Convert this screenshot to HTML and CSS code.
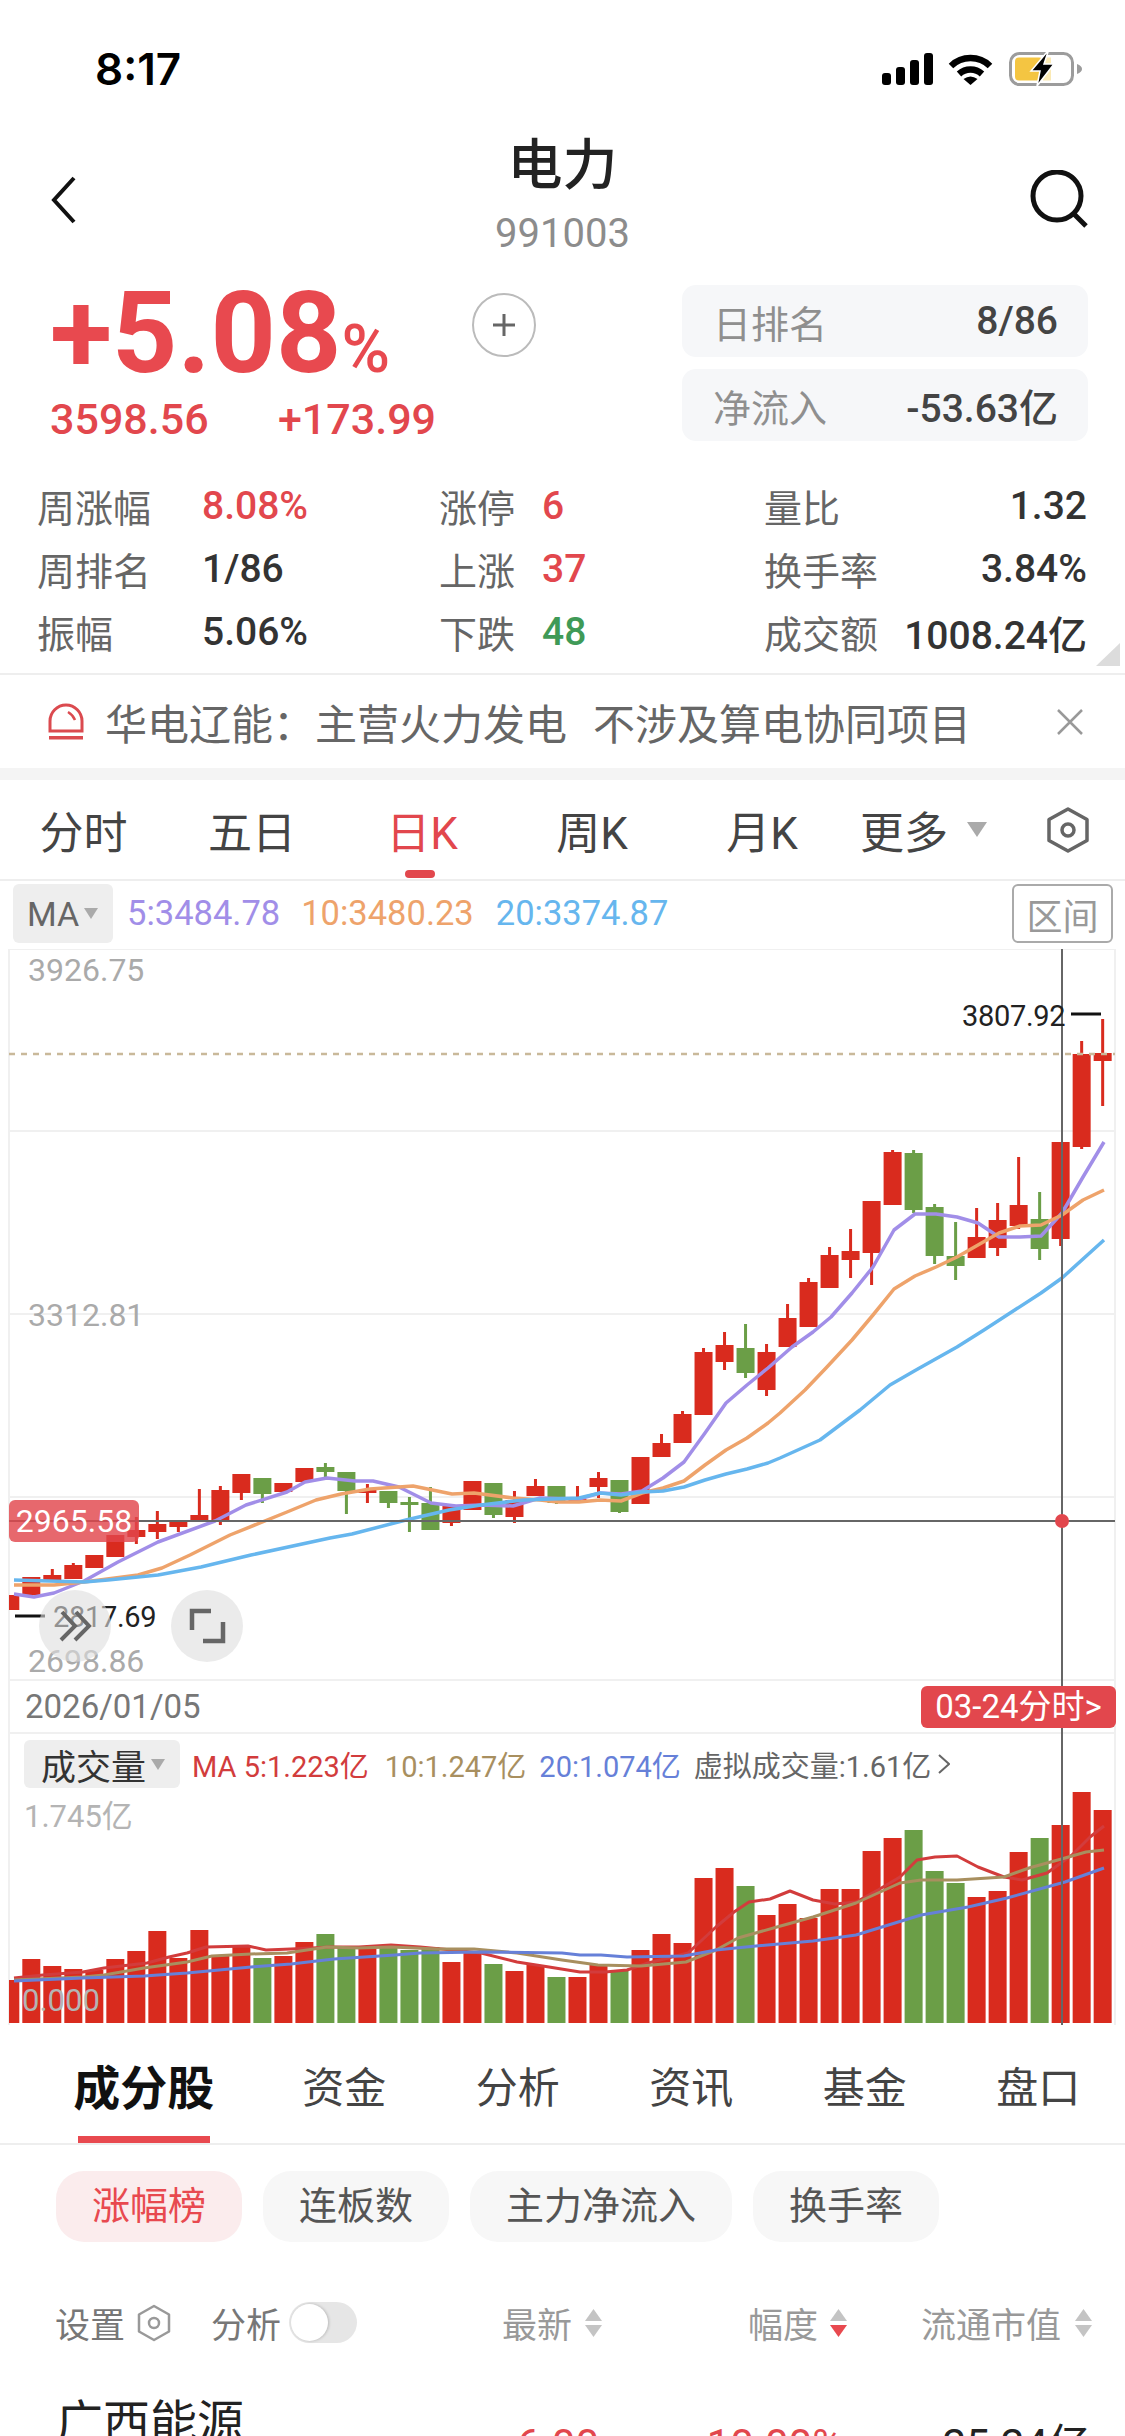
FILE: index.html
```html
<!DOCTYPE html>
<html lang="zh-CN">
<head>
    <meta charset="UTF-8">
    <meta name="viewport" content="width=device-width, initial-scale=1.0">
    <title>电力 991003</title>
    <link rel="stylesheet" href="styles.css">
</head>
<body>
    <div class="page">
        <div class="status-bar">
            <span class="time">8:17</span>
            <div class="status-icons">
                <svg class="icon-signal" viewBox="0 0 51 32">
                    <rect x="0" y="20" width="9" height="12" rx="3"/>
                    <rect x="14" y="14" width="9" height="18" rx="3"/>
                    <rect x="28" y="7" width="9" height="25" rx="3"/>
                    <rect x="42" y="0" width="9" height="32" rx="3"/>
                </svg>
                <svg class="icon-wifi" viewBox="0 0 45 32">
                    <path d="M3 13 A28 28 0 0 1 42 13" fill="none" stroke="#000" stroke-width="6.5"/>
                    <path d="M11 21 A17 17 0 0 1 34 21" fill="none" stroke="#000" stroke-width="6.5"/>
                    <path d="M15.5 26 L22.5 32 L29.5 26 Q22.5 21 15.5 26 Z"/>
                </svg>
                <svg class="icon-battery" viewBox="0 0 74 36">
                    <rect x="1.5" y="2.5" width="62" height="31" rx="9" fill="#fff" stroke="#9c9c9c" stroke-width="3"/>
                    <rect x="6" y="6.5" width="28" height="23" rx="4" fill="#f4c542"/>
                    <rect x="34" y="6.5" width="8" height="23" fill="#fbeab5"/>
                    <path d="M68 13 Q73 15 73 18 Q73 21 68 23 Z" fill="#9c9c9c"/>
                    <path d="M38 1 L22 20 L31 20 L28 35 L45 13 L35 13 L39 1 Z" stroke="#fff" stroke-width="1.5"/>
                </svg>
            </div>
        </div>

        <div class="header">
            <svg class="icon-back" viewBox="0 0 26 48">
                <path d="M23 2 L3 24 L23 46" fill="none" stroke="#111" stroke-width="4"/>
            </svg>
            <div class="title-col">
                <div class="title">电力</div>
                <div class="code">991003</div>
            </div>
            <svg class="icon-search" viewBox="0 0 60 60">
                <circle cx="27" cy="26" r="24" fill="none" stroke="#111" stroke-width="5"/>
                <path d="M44 44 L56 56" fill="none" stroke="#111" stroke-width="5"/>
            </svg>
        </div>

        <div class="quote">
            <div class="quote-left">
                <div class="pct">+5.08<span class="pct-sign">%</span></div>
                <div class="quote-sub">
                    <span class="quote-price">3598.56</span>
                    <span>+173.99</span>
                </div>
            </div>
            <div class="add-btn">
                <svg viewBox="0 0 26 26" width="26" height="26">
                    <path d="M13 2 V24 M2 13 H24" stroke="#666" stroke-width="3"/>
                </svg>
            </div>
            <div class="rank-cards">
                <div class="rank-card"><span class="rank-label">日排名</span><span class="rank-value">8/86</span></div>
                <div class="rank-card"><span class="rank-label">净流入</span><span class="rank-value">-53.63亿</span></div>
            </div>
        </div>

        <div class="stats">
            <div class="stat"><span class="stat-label label-wide">周涨幅</span><span class="red">8.08%</span></div>
            <div class="stat"><span class="stat-label label-short">涨停</span><span class="red">6</span></div>
            <div class="stat stat-end"><span class="stat-label">量比</span><span>1.32</span></div>
            <div class="stat"><span class="stat-label label-wide">周排名</span><span>1/86</span></div>
            <div class="stat"><span class="stat-label label-short">上涨</span><span class="red">37</span></div>
            <div class="stat stat-end"><span class="stat-label">换手率</span><span>3.84%</span></div>
            <div class="stat"><span class="stat-label label-wide">振幅</span><span>5.06%</span></div>
            <div class="stat"><span class="stat-label label-short">下跌</span><span class="green">48</span></div>
            <div class="stat stat-end"><span class="stat-label">成交额</span><span>1008.24亿</span></div>
            <div class="corner-mark"></div>
        </div>

        <div class="news">
            <svg class="icon-alarm" viewBox="0 0 36 38">
                <path d="M2 28 V18 A16 16 0 0 1 34 18 V28 Z" fill="none" stroke="#db4a4f" stroke-width="3"/>
                <path d="M20 9 Q25 12 27 17" fill="none" stroke="#db4a4f" stroke-width="2.5"/>
                <rect x="1" y="33" width="34" height="3.5" fill="#db4a4f"/>
            </svg>
            <span class="news-text">华电辽能：主营火力发电<span class="news-gap">不涉及算电协同项目</span></span>
            <svg class="icon-close" viewBox="0 0 26 26">
                <path d="M1 1 L25 25 M25 1 L1 25" stroke="#999" stroke-width="2.5"/>
            </svg>
        </div>
        <div class="band"></div>

        <div class="period-tabs">
            <div class="period-tab tab-first">分时</div>
            <div class="period-tab">五日</div>
            <div class="period-tab active">日K</div>
            <div class="period-tab">周K</div>
            <div class="period-tab">月K</div>
            <div class="period-more">更多<span class="arrow-down arrow-big"></span></div>
            <svg class="icon-hex" viewBox="0 0 42 46">
                <path d="M21 2 L40 12.5 V33.5 L21 44 L2 33.5 V12.5 Z" fill="none" stroke="#666" stroke-width="3.5" stroke-linejoin="round"/>
                <circle cx="21" cy="23" r="6" fill="none" stroke="#666" stroke-width="3.5"/>
            </svg>
        </div>

        <div class="ma-row">
            <div class="ma-btn">MA<span class="arrow-down"></span></div>
            <span class="ma-val ma5">5:3484.78</span>
            <span class="ma-val ma10">10:3480.23</span>
            <span class="ma-val ma20">20:3374.87</span>
            <div class="range-btn">区间</div>
        </div>

        <div class="chart">
            <svg id="kline" class="kline" viewBox="0 949 1125 1076"></svg>

            <div class="price-pane">
                <span class="axis-label axis-top">3926.75</span>
                <span class="axis-label axis-mid">3312.81</span>
                <span class="axis-label axis-low">2698.86</span>
                <span class="price-mark high-mark">3807.92</span>
                <span class="price-mark low-mark">2817.69</span>
                <span class="cross-tag">2965.58</span>
                <div class="float-btn btn-expand">
                    <svg viewBox="0 0 72 72" width="72" height="72">
                        <path d="M23 22 L36 36 L22 50 M37 22 L50 36 L36 50" fill="none" stroke="#666" stroke-width="4"/>
                    </svg>
                </div>
                <div class="float-btn btn-full">
                    <svg viewBox="0 0 72 72" width="72" height="72">
                        <path d="M21 40 V21 H40 M52 32 V51 H32" fill="none" stroke="#666" stroke-width="4.5"/>
                    </svg>
                </div>
            </div>

            <div class="date-row">
                <span>2026/01/05</span>
                <span class="date-tag">03-24分时&gt;</span>
            </div>

            <div class="vol-pane">
                <div class="vol-legend">
                    <div class="vol-btn">成交量<span class="arrow-down"></span></div>
                    <span class="vol-ma5">MA 5:1.223亿</span>
                    <span class="vol-ma10">10:1.247亿</span>
                    <span class="vol-ma20">20:1.074亿</span>
                    <span class="vol-virtual">虚拟成交量:1.61亿</span>
                    <svg class="icon-more" viewBox="0 0 12 20">
                        <path d="M1 1 L11 10 L1 19" fill="none" stroke="#666" stroke-width="2"/>
                    </svg>
                </div>
                <span class="vol-axis vol-max">1.745亿</span>
                <span class="vol-axis vol-min">0.000</span>
            </div>
        </div>

        <div class="sub-tabs">
            <div class="sub-tab active">成分股</div>
            <div class="sub-tab">资金</div>
            <div class="sub-tab">分析</div>
            <div class="sub-tab">资讯</div>
            <div class="sub-tab">基金</div>
            <div class="sub-tab">盘口</div>
        </div>

        <div class="pills">
            <div class="pill active">涨幅榜</div>
            <div class="pill">连板数</div>
            <div class="pill">主力净流入</div>
            <div class="pill">换手率</div>
        </div>

        <div class="list-head">
            <span>设置</span>
            <svg class="icon-hex-small" viewBox="0 0 34 38">
                <path d="M17 2 L32 10.5 V27.5 L17 36 L2 27.5 V10.5 Z" fill="none" stroke="#999" stroke-width="2.5" stroke-linejoin="round"/>
                <circle cx="17" cy="19" r="5" fill="none" stroke="#999" stroke-width="2.5"/>
            </svg>
            <span class="head-analyse">分析</span>
            <div class="toggle"><div class="toggle-knob"></div></div>
            <span class="head-latest">最新</span>
            <svg class="icon-sort sort-latest" viewBox="0 0 17 28">
                <path d="M8.5 0 L17 12 H0 Z" fill="#c4c4c4"/>
                <path d="M8.5 28 L17 16 H0 Z" fill="#c4c4c4"/>
            </svg>
            <span class="head-change">幅度</span>
            <svg class="icon-sort sort-change" viewBox="0 0 17 28">
                <path d="M8.5 0 L17 12 H0 Z" fill="#c4c4c4"/>
                <path d="M8.5 28 L17 16 H0 Z" fill="#e8494f"/>
            </svg>
            <span class="head-cap">流通市值</span>
            <svg class="icon-sort sort-cap" viewBox="0 0 17 28">
                <path d="M8.5 0 L17 12 H0 Z" fill="#c4c4c4"/>
                <path d="M8.5 28 L17 16 H0 Z" fill="#c4c4c4"/>
            </svg>
        </div>

        <div class="list-row">
            <span class="row-name">广西能源</span>
            <span class="row-val val-price red">6.00</span>
            <span class="row-val val-change red">10.00%</span>
            <span class="row-val val-cap">25.24亿</span>
        </div>
    </div>

    <script src="chart.js"></script>
</body>
</html>
```

FILE: styles.css
```css
* {
    box-sizing: border-box;
}
body {
    margin: 0;
    background: #fff;
    color: #333;
    font-family: Roboto, "Noto Sans CJK SC", sans-serif;
}
.page {
    width: 1125px;
    height: 2436px;
    overflow: hidden;
}
.red {
    color: #e2474d;
}
.green {
    color: #3f9a57;
}

/* status bar */
.status-bar {
    height: 120px;
    padding: 18px 42px 0 95px;
    display: flex;
    align-items: center;
    justify-content: space-between;
}
.time {
    font-family: Inter, sans-serif;
    font-size: 44px;
    font-weight: 600;
    color: #000;
}
.status-icons {
    display: flex;
    align-items: center;
}
.icon-signal {
    width: 51px;
    height: 32px;
}
.icon-wifi {
    width: 45px;
    height: 32px;
    margin-left: 15px;
}
.icon-battery {
    width: 74px;
    height: 36px;
    margin-left: 16px;
}

/* header */
.header {
    height: 160px;
    padding: 0 35px;
    display: grid;
    grid-template-columns: 1fr auto 1fr;
    align-items: center;
}
.icon-back {
    width: 26px;
    height: 48px;
    margin-left: 16px;
}
.icon-search {
    width: 60px;
    height: 60px;
    justify-self: end;
}
.title-col {
    height: 160px;
    padding-top: 10px;
    text-align: center;
}
.title {
    font-size: 55px;
    font-weight: 500;
    line-height: 70px;
    color: #222;
}
.code {
    margin-top: 9px;
    font-size: 40px;
    line-height: 50px;
    color: #8c8c8c;
}

/* quote block */
.quote {
    height: 194px;
    padding: 5px 37px 0 50px;
    display: flex;
    align-items: flex-start;
}
.quote-left {
    width: 422px;
}
.pct {
    height: 90px;
    padding-top: 3px;
    font-size: 114px;
    font-weight: 700;
    line-height: 90px;
    color: #e8494f;
    white-space: nowrap;
}
.pct-sign {
    font-size: 66px;
    font-weight: 500;
    line-height: 1;
}
.quote-sub {
    margin-top: 22px;
    display: flex;
    font-size: 43px;
    font-weight: 500;
    line-height: 44px;
    color: #e2474d;
}
.quote-price {
    width: 228px;
}
.add-btn {
    width: 64px;
    height: 64px;
    margin-top: 8px;
    border: 2px solid #bbb;
    border-radius: 50%;
    display: flex;
    align-items: center;
    justify-content: center;
}
.rank-cards {
    width: 406px;
    margin-left: auto;
    display: flex;
    flex-direction: column;
    gap: 12px;
}
.rank-card {
    height: 72px;
    padding: 0 30px 0 31px;
    background: #f6f7f9;
    border-radius: 14px;
    display: flex;
    align-items: center;
    justify-content: space-between;
}
.rank-label {
    font-size: 38px;
    color: #8f8f8f;
}
.rank-value {
    font-size: 39px;
    font-weight: 500;
    color: #444;
}

/* stats grid */
.stats {
    position: relative;
    height: 201px;
    padding: 0 38px 0 37px;
    display: grid;
    grid-template-columns: 402px 325px 323px;
    grid-auto-rows: 63px;
    border-bottom: 2px solid #eee;
    font-size: 39px;
    font-weight: 500;
    color: #333;
}
.stat {
    display: flex;
    align-items: center;
}
.stat-end {
    justify-content: space-between;
}
.stat-label {
    font-size: 38px;
    font-weight: 400;
    color: #666;
}
.label-wide {
    width: 165px;
}
.label-short {
    width: 103px;
}
.corner-mark {
    position: absolute;
    right: 5px;
    bottom: 7px;
    width: 24px;
    height: 23px;
    background: #dcdcdc;
    clip-path: polygon(100% 0, 100% 100%, 0 100%);
}

/* news strip */
.news {
    height: 93px;
    padding: 0 42px 0 48px;
    display: flex;
    align-items: center;
}
.icon-alarm {
    width: 36px;
    height: 38px;
}
.news-text {
    margin-left: 21px;
    font-size: 42px;
    color: #666;
    white-space: nowrap;
}
.news-gap {
    margin-left: 26px;
}
.icon-close {
    width: 26px;
    height: 26px;
    margin-left: auto;
}
.band {
    height: 12px;
    background: #f4f4f4;
}

/* period tabs */
.period-tabs {
    height: 101px;
    display: flex;
    align-items: center;
    border-bottom: 2px solid #eee;
    font-size: 44px;
    color: #444;
}
.period-tab {
    position: relative;
    width: 170px;
    height: 99px;
    display: flex;
    align-items: center;
    justify-content: center;
}
.period-tab.tab-first {
    width: 167px;
}
.period-tab.active {
    color: #e2474d;
}
.period-tab.active::after {
    content: "";
    position: absolute;
    left: 68px;
    bottom: 1px;
    width: 30px;
    height: 8px;
    border-radius: 4px;
    background: #e2474d;
}
.period-more {
    margin-left: 13px;
    display: flex;
    align-items: center;
}
.arrow-down {
    width: 0;
    height: 0;
    margin-left: 5px;
    border-left: 7px solid transparent;
    border-right: 7px solid transparent;
    border-top: 11px solid #aaa;
}
.arrow-big {
    margin-left: 19px;
    border-left-width: 10px;
    border-right-width: 10px;
    border-top-width: 15px;
}
.icon-hex {
    width: 42px;
    height: 46px;
    margin-left: 60px;
}

/* MA legend */
.ma-row {
    height: 68px;
    padding: 3px 12px 0 13px;
    display: flex;
    align-items: flex-start;
}
.ma-btn {
    width: 100px;
    height: 59px;
    padding-left: 14px;
    border-radius: 6px;
    background: #eee;
    display: flex;
    align-items: center;
    font-size: 34px;
    color: #666;
}
.ma-val {
    margin-left: 22px;
    font-size: 34.5px;
    line-height: 59px;
}
.ma-val.ma5 {
    margin-left: 14px;
    color: #a18ee8;
}
.ma-val.ma10 {
    margin-left: 21px;
    color: #eea36b;
}
.ma-val.ma20 {
    color: #66b6ee;
}
.range-btn {
    width: 101px;
    height: 59px;
    margin-left: auto;
    border: 2px solid #aaa;
    border-radius: 6px;
    display: flex;
    align-items: center;
    justify-content: center;
    font-size: 36px;
    color: #999;
}

/* chart */
.chart {
    position: relative;
    height: 1076px;
}
.kline {
    position: absolute;
    left: 0;
    top: 0;
    width: 1125px;
    height: 1076px;
}
.price-pane {
    position: relative;
    height: 731px;
}
.axis-label {
    position: absolute;
    left: 28px;
    font-size: 32px;
    line-height: 36px;
    color: #aaa;
}
.axis-top {
    top: 3px;
}
.axis-mid {
    top: 348px;
}
.axis-low {
    top: 694px;
}
.price-mark {
    position: absolute;
    font-size: 29px;
    line-height: 36px;
    letter-spacing: -0.3px;
    color: #222;
}
.high-mark {
    left: 962px;
    top: 49px;
}
.low-mark {
    left: 53px;
    top: 650px;
}
.cross-tag {
    position: absolute;
    left: 9px;
    top: 551px;
    width: 130px;
    height: 42px;
    border-radius: 6px;
    background: rgba(226, 71, 77, 0.82);
    font-size: 32px;
    line-height: 42px;
    text-align: center;
    color: #fff;
}
.float-btn {
    position: absolute;
    top: 641px;
    width: 72px;
    height: 72px;
    border-radius: 50%;
    background: rgba(222, 222, 222, 0.6);
}
.btn-expand {
    left: 39px;
}
.btn-full {
    left: 171px;
}
.date-row {
    position: relative;
    height: 53px;
    padding-left: 25px;
    display: flex;
    align-items: center;
    font-size: 33px;
    color: #777;
}
.date-tag {
    position: absolute;
    left: 921px;
    top: 6px;
    width: 195px;
    height: 42px;
    border-radius: 6px;
    background: #e2474d;
    font-size: 33px;
    line-height: 42px;
    text-align: center;
    color: #fff;
}
.vol-pane {
    position: relative;
    height: 292px;
}
.vol-legend {
    padding: 7px 0 0 24px;
    display: flex;
    align-items: center;
    font-size: 29px;
    white-space: nowrap;
}
.vol-btn {
    width: 156px;
    height: 48px;
    padding-left: 17px;
    border-radius: 6px;
    background: #eee;
    display: flex;
    align-items: center;
    font-size: 35px;
    color: #333;
}
.vol-ma5 {
    margin-left: 12px;
    color: #d23c3c;
}
.vol-ma10 {
    margin-left: 16px;
    color: #a88f5f;
}
.vol-ma20 {
    margin-left: 13px;
    color: #6680d8;
}
.vol-virtual {
    margin-left: 13px;
    color: #666;
}
.icon-more {
    width: 12px;
    height: 20px;
    margin-left: 7px;
}
.vol-axis {
    position: absolute;
    left: 24px;
    font-size: 31px;
    line-height: 36px;
    color: #b4b4b4;
}
.vol-max {
    top: 66px;
}
.vol-min {
    left: 22px;
    top: 250px;
}

/* lower tabs */
.sub-tabs {
    height: 120px;
    padding-left: 57px;
    display: flex;
    align-items: center;
    border-bottom: 2px solid #eee;
    font-size: 42px;
    color: #444;
}
.sub-tab {
    position: relative;
    width: 174px;
    height: 118px;
    display: flex;
    align-items: center;
    justify-content: center;
}
.sub-tab.active {
    margin-right: 27px;
    font-size: 47px;
    font-weight: 700;
    color: #111;
}
.sub-tab.active::after {
    content: "";
    position: absolute;
    left: 21px;
    bottom: 0;
    width: 132px;
    height: 7px;
    background: #e8494f;
}

/* filter pills */
.pills {
    padding: 26px 0 0 56px;
    display: flex;
    gap: 21px;
}
.pill {
    height: 71px;
    padding: 0 36px;
    border-radius: 28px;
    background: #f7f7f7;
    font-size: 38px;
    line-height: 71px;
    color: #555;
}
.pill.active {
    background: #fbeced;
    color: #e8494f;
}

/* list */
.list-head {
    height: 41px;
    margin-top: 60px;
    padding-left: 55px;
    display: flex;
    align-items: center;
    font-size: 35px;
    color: #999;
    white-space: nowrap;
}
.list-head > span:first-child {
    color: #777;
}
.icon-hex-small {
    width: 34px;
    height: 38px;
    margin-left: 12px;
}
.head-analyse {
    margin-left: 40px;
    color: #777;
}
.toggle {
    width: 68px;
    height: 41px;
    margin-left: 8px;
    padding: 2px;
    border-radius: 21px;
    background: #e6e6e6;
}
.toggle-knob {
    width: 37px;
    height: 37px;
    border-radius: 50%;
    background: #fff;
    box-shadow: 1px 0 3px rgba(0, 0, 0, 0.2);
}
.head-latest {
    margin-left: 145px;
}
.icon-sort {
    width: 17px;
    height: 28px;
}
.sort-latest {
    margin-left: 13px;
}
.sort-change {
    margin-left: 12px;
}
.sort-cap {
    margin-left: 14px;
}
.head-change {
    margin-left: 146px;
}
.head-cap {
    margin-left: 74px;
}
.list-row {
    margin-top: 50px;
    padding-left: 56px;
    display: flex;
    align-items: flex-start;
}
.row-name {
    width: 191px;
    font-size: 47px;
    line-height: 60px;
    color: #222;
    white-space: nowrap;
}
.row-val {
    padding-top: 27px;
    font-size: 42px;
    line-height: 50px;
    text-align: right;
}
.val-price {
    width: 352px;
}
.val-change {
    width: 244px;
}
.val-cap {
    width: 247px;
    color: #222;
}
```

FILE: chart.js
```js
// all coordinates are page pixels, the svg viewBox starts at y=949
const RED = '#d92b1e';
const GREEN = '#6b9e47';
const STEP = 21.007;
const FIRST_X = 10.3;
const BAR_W = 18;
const LEFT = 9;
const RIGHT = 1115;
const VOL_BASE = 2023;

// [bodyTop, bodyBottom, wickTop, wickBottom, green?]
const candles = [
    [1595, 1610, 1595, 1610], [1577, 1595, 1577, 1595], [1575, 1580, 1569, 1580], [1565, 1579, 1563, 1579],
    [1555, 1568, 1555, 1568], [1535, 1557, 1535, 1557], [1530, 1537, 1517, 1544], [1524, 1532, 1511, 1539],
    [1521, 1527, 1521, 1532], [1515, 1520, 1489, 1520], [1490, 1521, 1486, 1525], [1474, 1493, 1474, 1500],
    [1478, 1494, 1478, 1503, 1], [1483, 1492, 1483, 1492], [1468, 1482, 1468, 1482], [1467, 1472, 1463, 1477, 1],
    [1472, 1491, 1472, 1514, 1], [1490, 1493, 1484, 1503], [1491, 1503, 1491, 1508, 1], [1502, 1505, 1497, 1532, 1],
    [1503, 1530, 1487, 1530, 1], [1506, 1523, 1505, 1526], [1481, 1510, 1481, 1510], [1483, 1515, 1483, 1518, 1],
    [1500, 1517, 1491, 1523], [1486, 1496, 1479, 1496], [1486, 1503, 1486, 1504, 1], [1499, 1501, 1486, 1502],
    [1478, 1487, 1472, 1498], [1480, 1512, 1480, 1513, 1], [1457, 1504, 1457, 1504], [1443, 1457, 1434, 1457],
    [1414, 1443, 1411, 1443], [1352, 1415, 1348, 1415], [1345, 1362, 1332, 1370], [1348, 1373, 1324, 1378, 1],
    [1352, 1390, 1344, 1396], [1318, 1347, 1304, 1347], [1282, 1327, 1278, 1327], [1255, 1288, 1247, 1288],
    [1251, 1260, 1229, 1278], [1201, 1253, 1201, 1285], [1152, 1205, 1150, 1205], [1153, 1210, 1150, 1213, 1],
    [1207, 1256, 1204, 1264, 1], [1256, 1266, 1222, 1280, 1], [1237, 1258, 1208, 1258], [1220, 1248, 1203, 1256],
    [1205, 1226, 1157, 1229], [1219, 1249, 1192, 1260, 1], [1142, 1239, 1142, 1246], [1054, 1147, 1041, 1149],
    [1053, 1061, 1019, 1106]
];

const volumeTops = [
    1980, 1959, 1966, 1969, 1970, 1959, 1951, 1931, 1958, 1930, 1955, 1945, 1958, 1956, 1942, 1934, 1947, 1948,
    1947, 1950, 1947, 1962, 1952, 1964, 1971, 1965, 1977, 1977, 1965, 1970, 1950, 1934, 1943, 1878, 1868, 1886,
    1915, 1904, 1918, 1889, 1889, 1851, 1838, 1830, 1871, 1883, 1897, 1891, 1852, 1838, 1825, 1792, 1810
];

const ma5 = [[14,1594],[34,1597],[54,1593],[84,1581],[118,1562],[158,1542],[215,1521],[246,1505],[287,1492],[305,1482],[327,1478],[355,1481],[373,1481],[399,1487],[431,1503],[456,1506],[481,1505],[513,1506],[540,1498],[579,1499],[600,1493],[621,1494],[642,1491],[663,1478],[684,1462],[705,1433],[726,1403],[747,1385],[768,1368],[792,1347],[813,1332],[831,1317],[852,1293],[873,1267],[894,1230],[915,1214],[936,1214],[957,1217],[978,1223],[999,1237],[1020,1237],[1041,1236],[1062,1213],[1083,1177],[1104,1142]];
const ma10 = [[14,1585],[54,1585],[84,1582],[138,1575],[162,1568],[190,1555],[230,1535],[287,1512],[316,1500],[341,1494],[370,1489],[413,1486],[452,1494],[474,1493],[513,1498],[540,1500],[558,1502],[579,1502],[600,1500],[621,1501],[642,1493],[663,1488],[684,1481],[705,1465],[726,1450],[747,1438],[768,1423],[780,1413],[805,1390],[826,1368],[852,1340],[873,1315],[894,1289],[915,1276],[936,1267],[957,1257],[978,1245],[999,1233],[1020,1226],[1041,1225],[1062,1215],[1083,1200],[1104,1190]];
const ma20 = [[14,1580],[84,1582],[108,1580],[158,1575],[201,1567],[251,1555],[330,1538],[352,1534],[406,1520],[449,1510],[481,1505],[524,1500],[579,1498],[600,1493],[621,1495],[642,1492],[663,1491],[684,1487],[705,1480],[726,1474],[747,1469],[768,1463],[780,1458],[820,1440],[860,1410],[890,1385],[916,1370],[957,1347],[984,1330],[1041,1293],[1062,1278],[1104,1240]];

const volMa5 = [[14,1978],[43,1975],[83,1972],[104,1968],[147,1963],[169,1957],[187,1953],[206,1947],[248,1946],[266,1950],[291,1949],[312,1948],[330,1947],[359,1947],[391,1945],[420,1947],[452,1950],[481,1953],[517,1962],[549,1967],[580,1972],[605,1972],[627,1970],[648,1963],[688,1953],[716,1927],[734,1912],[749,1902],[770,1899],[790,1891],[813,1900],[835,1904],[856,1902],[878,1890],[900,1877],[917,1860],[935,1857],[957,1856],[978,1867],[1004,1877],[1022,1880],[1047,1873],[1072,1855],[1090,1837],[1104,1826]];
const volMa10 = [[14,1980],[83,1977],[104,1975],[144,1968],[187,1962],[212,1956],[251,1954],[287,1953],[327,1947],[359,1948],[391,1947],[438,1949],[474,1949],[517,1953],[562,1960],[598,1965],[641,1966],[686,1962],[716,1950],[738,1938],[777,1927],[813,1917],[856,1903],[900,1883],[921,1880],[957,1880],[1004,1877],[1029,1868],[1065,1858],[1086,1852],[1104,1850]];
const volMa20 = [[14,1981],[83,1978],[144,1976],[187,1973],[251,1967],[291,1964],[334,1959],[395,1955],[420,1953],[481,1952],[562,1953],[580,1955],[601,1955],[627,1957],[684,1956],[716,1950],[756,1946],[813,1941],[856,1935],[921,1915],[968,1907],[1007,1898],[1065,1882],[1104,1868]];

function line(x1, y1, x2, y2, color, width, dash) {
    const d = dash ? ` stroke-dasharray="${dash}"` : '';
    return `<line x1="${x1}" y1="${y1}" x2="${x2}" y2="${y2}" stroke="${color}" stroke-width="${width}"${d}/>`;
}

function rect(x, y, w, h, color) {
    return `<rect x="${x}" y="${y}" width="${w}" height="${h}" fill="${color}"/>`;
}

function curve(points, color, width) {
    return `<polyline points="${points.join(' ')}" fill="none" stroke="${color}" stroke-width="${width}" stroke-linejoin="round"/>`;
}

function drawChart() {
    let out = '';

    [949, 1131, 1314, 1497, 1680, 1733].forEach(function(y) {
        out += line(LEFT, y, RIGHT, y, '#f0f0f0', 2);
    });
    out += line(LEFT, 949, LEFT, 2025, '#f0f0f0', 2);
    out += line(RIGHT, 949, RIGHT, 2025, '#f0f0f0', 2);

    candles.forEach(function(c, i) {
        const color = c[4] ? GREEN : RED;
        const cx = FIRST_X + STEP * i;
        const x = Math.max(cx - BAR_W / 2, LEFT);
        const w = cx + BAR_W / 2 - x;
        if (c[2] < c[0] || c[3] > c[1]) {
            out += rect(cx - 1.5, c[2], 3, c[3] - c[2], color);
        }
        out += rect(x, c[0], w, c[1] - c[0], color);

        out += rect(x, volumeTops[i], w, VOL_BASE - volumeTops[i], color);
    });

    out += line(LEFT, 1054, RIGHT, 1054, '#c9b99a', 2.5, '6 6');

    out += curve(ma5, '#a18ee8', 3.5);
    out += curve(ma10, '#eea36b', 3.5);
    out += curve(ma20, '#66b6ee', 3.5);
    out += curve(volMa5, '#d23c3c', 3);
    out += curve(volMa10, '#a88f5f', 3);
    out += curve(volMa20, '#6680d8', 3);

    // high and low markers
    out += line(1071, 1014, 1101, 1014, '#111', 3);
    out += line(15, 1616, 45, 1616, '#111', 3);

    // crosshair
    out += line(1062, 949, 1062, 2025, '#666', 2);
    out += line(LEFT, 1521, RIGHT, 1521, '#666', 2);
    out += `<circle cx="1062" cy="1521" r="7" fill="#e2474d"/>`;

    document.getElementById('kline').innerHTML = out;
}

drawChart();
```
